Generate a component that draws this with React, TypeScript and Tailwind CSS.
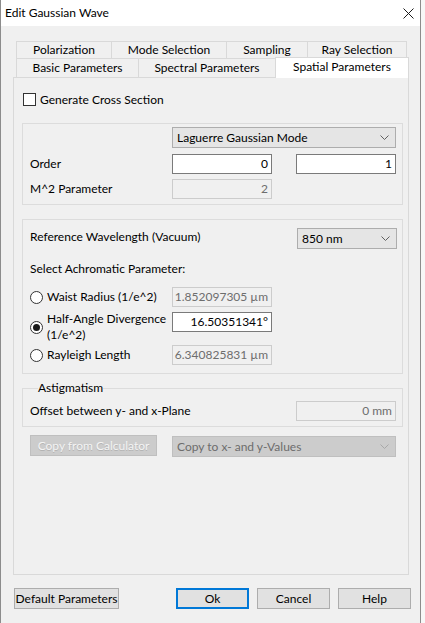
import React from 'react';

const Chevron = ({ color = '#606060' }: { color?: string }) => (
  <svg width="9" height="5" viewBox="0 0 9 5" className="shrink-0">
    <path d="M0.5 0.5 L4.5 4.5 L8.5 0.5" fill="none" stroke={color} strokeWidth="1" />
  </svg>
);

const Field = ({ value, disabled, className = '' }: { value: string; disabled?: boolean; className?: string }) => (
  <div
    className={`h-[20px] w-[100px] flex items-center justify-end pr-[3px] border ${
      disabled ? 'bg-[#f0f0f0] border-[#cccccc] text-[#6d6d6d]' : 'bg-white border-[#7a7a7a] text-black'
    } ${className}`}
  >
    {value}
  </div>
);

const Combo = ({ value, width, disabled }: { value: string; width: string; disabled?: boolean }) => (
  <div
    className={`h-[21px] ${width} flex items-center justify-between pl-[4px] pr-[6px] border ${
      disabled ? 'bg-[#cccccc] border-[#bfbfbf] text-[#6d6d6d]' : 'bg-[#e5e5e5] border-[#adadad] text-black'
    }`}
  >
    <span>{value}</span>
    <Chevron color={disabled ? '#a8a8a8' : '#606060'} />
  </div>
);

const Radio = ({ checked }: { checked?: boolean }) => (
  <div className="w-[13px] h-[13px] rounded-full border border-[#333333] bg-white flex items-center justify-center shrink-0">
    {checked && <div className="w-[7px] h-[7px] rounded-full bg-[#1a1a1a]" />}
  </div>
);

const Tab = ({ label, w, last }: { label: string; w: string; last?: boolean }) => (
  <div
    className={`${w} h-full flex items-center justify-center border-l border-t border-[#d9d9d9] ${last ? 'border-r' : ''}`}
  >
    {label}
  </div>
);

const Btn = ({ label, w, primary }: { label: string; w: string; primary?: boolean }) => (
  <div
    className={`${w} h-[21px] flex items-center justify-center bg-[#e1e1e1] ${
      primary ? 'border-2 border-[#0078d7]' : 'border border-[#adadad]'
    }`}
  >
    {label}
  </div>
);

export default function App() {
  return (
    <div className="w-[425px] h-[623px] bg-[#f7f7f7] font-['Lato',sans-serif] text-[12px] leading-[16px] text-black overflow-hidden whitespace-nowrap">
      <div className="w-[421px] h-[623px] bg-[#f0f0f0] border-l border-r border-[#8c8c8c] flex flex-col">
        <div className="h-[26px] bg-white flex items-center justify-between pl-[4px] pr-[6px] shrink-0">
          <span className="text-[12px]">Edit Gaussian Wave</span>
          <svg width="11" height="11" viewBox="0 0 11 11">
            <path d="M0.5 0.5 L10.5 10.5 M10.5 0.5 L0.5 10.5" stroke="#1a1a1a" strokeWidth="1" />
          </svg>
        </div>

        <div className="pl-[12px] pt-[15px] flex flex-col">
          <div className="flex h-[17px] ml-[3px]">
            <Tab label="Polarization" w="w-[95px]" />
            <Tab label="Mode Selection" w="w-[115px]" />
            <Tab label="Sampling" w="w-[81px]" />
            <Tab label="Ray Selection" w="w-[100px]" last />
          </div>
          <div className="flex h-[19px] ml-[3px] items-end">
            <Tab label="Basic Parameters" w="w-[122px]" />
            <div className="w-[137px] h-full flex items-center justify-center border-l border-t border-[#d9d9d9]">
              Spectral Parameters
            </div>
            <div className="w-[134px] h-[21px] -mb-px relative z-10 bg-white flex items-start justify-center pt-[1px] border-l border-t border-r border-[#d9d9d9]">
              Spatial Parameters
            </div>
          </div>

          <div className="w-[396px] h-[498px] border border-[#d9d9d9] flex flex-col pl-[8px]">
            <div className="flex items-center gap-[4px] mt-[15px] ml-[1px] h-[13px]">
              <div className="w-[13px] h-[13px] border border-[#333333] bg-white" />
              <span>Generate Cross Section</span>
            </div>

            <div className="mt-[17px] w-[381px] h-[82px] border border-[#dcdcdc] pl-[7px] flex flex-col">
              <div className="mt-[3px] ml-[142px]">
                <Combo value="Laguerre Gaussian Mode" width="w-[224px]" />
              </div>
              <div className="mt-[6px] flex items-center">
                <span className="w-[142px]">Order</span>
                <Field value="0" />
                <Field value="1" className="ml-[24px]" />
              </div>
              <div className="mt-[5px] flex items-center">
                <span className="w-[142px]">M^2 Parameter</span>
                <Field value="2" disabled />
              </div>
            </div>

            <div className="mt-[14px] w-[381px] h-[155px] border border-[#dcdcdc] pl-[7px] flex flex-col">
              <div className="mt-[8px] flex items-center justify-between pr-[5px]">
                <span className="-mt-[3px]">Reference Wavelength (Vacuum)</span>
                <Combo value="850 nm" width="w-[100px]" />
              </div>
              <div className="mt-[12px]">Select Achromatic Parameter:</div>
              <div className="mt-[10px] flex items-center">
                <div className="w-[142px] flex items-center gap-[4px]">
                  <Radio />
                  <span>Waist Radius (1/e^2)</span>
                </div>
                <Field value="1.852097305 µm" disabled />
              </div>
              <div className="mt-[4px] flex items-start">
                <div className="w-[142px] h-[32px] flex items-center gap-[4px]">
                  <Radio checked />
                  <span>
                    Half-Angle Divergence
                    <br />
                    (1/e^2)
                  </span>
                </div>
                <Field value="16.50351341°" className="mt-[1px]" />
              </div>
              <div className="mt-[2px] flex items-center">
                <div className="w-[142px] flex items-center gap-[4px]">
                  <Radio />
                  <span>Rayleigh Length</span>
                </div>
                <Field value="6.340825831 µm" disabled />
              </div>
            </div>

            <fieldset className="mt-[6px] w-[381px] h-[47px] border border-[#dcdcdc] pl-[7px]">
              <legend className="ml-[8px] px-0">Astigmatism</legend>
              <div className="mt-[5px] flex items-center justify-between pr-[6px]">
                <span>Offset between y- and x-Plane</span>
                <Field value="0 mm" disabled className="h-[19px]" />
              </div>
            </fieldset>

            <div className="mt-[8px] ml-[8px] flex items-start">
              <div className="w-[127px] h-[21px] flex items-center justify-center bg-[#cccccc] border border-[#bfbfbf] text-[#f4f4f4] [text-shadow:0_1px_0_#b3b3b3]">
                Copy from Calculator
              </div>
              <div className="ml-[15px] mt-[1px]">
                <Combo value="Copy to x- and y-Values" width="w-[224px]" disabled />
              </div>
            </div>
          </div>

          <div className="mt-[13px] flex items-center ml-[1px]">
            <Btn label="Default Parameters" w="w-[105px]" />
            <div className="ml-[57px] flex gap-[8px]">
              <Btn label="Ok" w="w-[73px]" primary />
              <Btn label="Cancel" w="w-[73px]" />
              <Btn label="Help" w="w-[73px]" />
            </div>
          </div>
        </div>
      </div>
    </div>
  );
}
